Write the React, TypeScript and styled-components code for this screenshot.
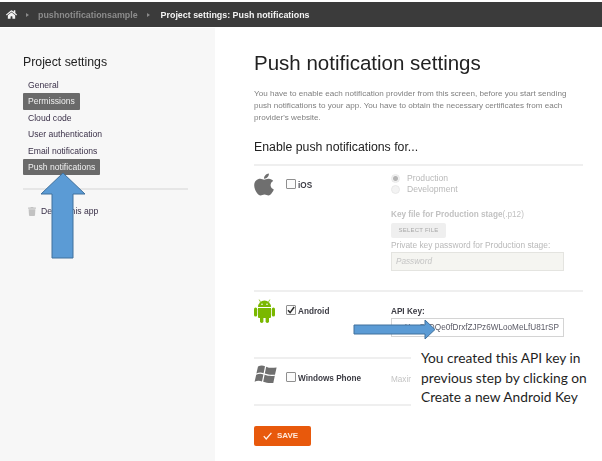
import React from 'react';
import styled, { createGlobalStyle } from 'styled-components';
import { FaApple, FaHome, FaTrash } from 'react-icons/fa';

const GlobalStyle = createGlobalStyle`
  html, body {
    margin: 0;
    padding: 0;
    background: #ffffff;
  }
  body {
    font-family: "Liberation Sans", Arial, sans-serif;
  }
`;

const Page = styled.div`
  position: relative;
  display: flex;
  flex-direction: column;
  width: 602px;
  height: 461px;
  overflow: hidden;
  padding-top: 2px;
  box-sizing: border-box;
  filter: blur(0.35px);
`;

const TopBar = styled.header`
  display: flex;
  align-items: center;
  flex: 0 0 25px;
  padding-left: 6px;
  background-color: #3b3b3b;
  font-size: 8.9px;
  font-weight: bold;
`;

const HomeIcon = styled(FaHome)`
  width: 11px;
  height: 11px;
  color: #f2f2f2;
`;

const Caret = styled.span`
  width: 0;
  height: 0;
  margin: 0 9px 0 9px;
  border-left: 3px solid #8a8a8a;
  border-top: 2px solid transparent;
  border-bottom: 2px solid transparent;
`;

const Crumb = styled.span<{ $current?: boolean }>`
  margin-left: ${(p) => (p.$current ? '2px' : '0')};
  color: ${(p) => (p.$current ? '#f4f4f4' : '#8c8c8c')};
`;

const Body = styled.div`
  display: flex;
  flex: 1;
  margin-top: 1px;
`;

const Sidebar = styled.aside`
  flex: 0 0 215px;
  box-sizing: border-box;
  padding: 26px 27px 0 23px;
  background-color: #f7f7f7;
`;

const SideTitle = styled.h2`
  margin: 0 0 6px;
  font-size: 12.3px;
  line-height: 17px;
  font-weight: normal;
  color: #222222;
`;

const SideNav = styled.nav`
  display: flex;
  flex-direction: column;
  align-items: flex-start;
  padding-bottom: 13px;
  border-bottom: 2px solid #e6e6e6;
`;

const SideItem = styled.a<{ $active?: boolean }>`
  height: 16.4px;
  padding: 0 5px;
  border-radius: 1px;
  font-size: 8.6px;
  line-height: 16px;
  color: ${(p) => (p.$active ? '#f0f0f0' : '#3a3048')};
  background-color: ${(p) => (p.$active ? '#6a6a6a' : 'transparent')};
`;

const DeleteLink = styled.a`
  display: flex;
  align-items: center;
  gap: 5px;
  margin: 16px 0 0 5px;
  font-size: 8.6px;
  color: #3a3048;
`;

const TrashIcon = styled(FaTrash)`
  width: 8px;
  height: 9px;
  color: #c2c2c2;
`;

const Main = styled.main`
  flex: 1;
  padding: 22px 19px 0 39px;
`;

const Title = styled.h1`
  margin: 0;
  font-size: 20.5px;
  line-height: 26px;
  font-weight: normal;
  color: #222222;
`;

const Intro = styled.p`
  margin: 12px 0 0;
  font-size: 8.1px;
  line-height: 12.2px;
  color: #808080;
`;

const SectionTitle = styled.h3`
  margin: 14px 0 9px;
  font-size: 12.3px;
  line-height: 16px;
  font-weight: normal;
  color: #222222;
`;

const ProviderRow = styled.section<{ $height: number }>`
  display: grid;
  grid-template-columns: 32px 105px 1fr;
  height: ${(p) => p.$height}px;
  box-sizing: border-box;
  padding-top: 7px;
  border-top: 2px solid #efefef;
`;

const RowEnd = styled.div`
  height: 2px;
  background-color: #efefef;
`;

const ProviderIcon = styled.div`
  margin-top: -1px;
  color: #6f6f6f;
  line-height: 0;

  svg {
    width: 20px;
    height: 25px;
    fill: currentColor;
  }
`;

const AndroidIcon = styled(ProviderIcon)`
  margin-top: 0;
  color: #7ab800;

  svg {
    width: 21px;
    height: 24px;
  }
`;

const WindowsIcon = styled(ProviderIcon)`
  svg {
    width: 23px;
    height: 20px;
  }
`;

const ProviderLabel = styled.label`
  display: flex;
  align-items: center;
  align-self: start;
  gap: 2px;
  height: 12px;
  margin-top: 6.5px;
  font-size: 8.2px;
  font-weight: bold;
  color: #3c3c44;
`;

const CheckBox = styled.span`
  display: flex;
  align-items: center;
  justify-content: center;
  width: 8px;
  height: 8px;
  margin-top: -2px;
  border: 1px solid #8f8f8f;
  border-radius: 1px;
  background-color: #fbfbfb;
`;

const Radio = styled.span<{ $on?: boolean }>`
  width: 9px;
  height: 9px;
  box-sizing: border-box;
  border: 1px solid #e8e8e8;
  border-radius: 50%;
  background: ${(p) => (p.$on ? 'radial-gradient(circle, #b5b5b5 0 2px, #f2f2f2 3px)' : '#f3f3f3')};
`;

const RadioLine = styled.div`
  display: flex;
  align-items: center;
  gap: 7px;
  height: 11px;
  font-size: 8.6px;
  color: #b9b9b9;
`;

const Form = styled.div`
  display: flex;
  flex-direction: column;
  align-items: flex-start;
`;

const FieldLabel = styled.div`
  margin-top: 14px;
  font-size: 8.2px;
  line-height: 12px;
  font-weight: bold;
  color: #c2c2c2;

  span {
    font-weight: normal;
  }
`;

const HintLabel = styled.div`
  font-size: 8.4px;
  line-height: 14px;
  color: #b9b9b9;
`;

const FileButton = styled.button`
  width: 55px;
  height: 15px;
  margin-top: 2px;
  padding: 0;
  border: none;
  border-radius: 2px;
  background-color: #efefef;
  font-family: inherit;
  font-size: 6px;
  letter-spacing: 0.2px;
  color: #a8a8a8;
`;

const PasswordBox = styled.div`
  width: 173px;
  height: 19px;
  box-sizing: border-box;
  padding: 0 4px;
  border: 1px solid #e4e4e0;
  background-color: #f5f5f1;
  font-size: 8.2px;
  font-style: italic;
  line-height: 17px;
  color: #c4c4c4;
`;

const KeyBox = styled.div`
  width: 173px;
  height: 19px;
  box-sizing: border-box;
  padding: 0 4px;
  border: 1px solid #d4d4d4;
  background-color: #ffffff;
  font-size: 8.2px;
  line-height: 17px;
  text-align: right;
  white-space: nowrap;
  overflow: hidden;
  color: #5b5b66;
`;

const ApiLabel = styled.div`
  margin: 7px 0 1px;
  font-size: 8.2px;
  line-height: 11px;
  font-weight: bold;
  color: #3c3c44;
`;

const MaxNote = styled.div`
  margin-top: 9px;
  font-size: 8.2px;
  color: #c4c4c4;
`;

const SaveButton = styled.button`
  display: flex;
  align-items: center;
  gap: 5px;
  width: 57px;
  height: 20px;
  margin-top: 20px;
  padding: 0 0 0 9px;
  border: none;
  border-radius: 2px;
  background-color: #e8590c;
  font-family: inherit;
  font-size: 8px;
  font-weight: bold;
  color: #ffe9dc;
`;

const CalloutText = styled.div`
  position: absolute;
  left: 411px;
  top: 345px;
  width: 191px;
  height: 62px;
  padding: 3px 0 0 10px;
  box-sizing: border-box;
  background-color: #ffffff;
  font-family: Lato, "Open Sans", sans-serif;
  font-size: 13.75px;
  line-height: 19.6px;
  color: #1f1f1f;
  white-space: nowrap;
`;

const ArrowUp = styled.svg`
  position: absolute;
  left: 40px;
  top: 172px;
  width: 46px;
  height: 87px;
`;

const ArrowRight = styled.svg`
  position: absolute;
  left: 353px;
  top: 319px;
  width: 83px;
  height: 21px;
`;

const WindowsFlag = () => (
  <svg viewBox="0 0 23 20" preserveAspectRatio="none">
    <path d="M4 1.5C6.5.2 8.6.2 11 1.2L9.6 8.3C7.2 7.2 5 7.3 2.4 8.6Z" />
    <path d="M12.2 1.7C15 3 17.2 3 22.6 2.6L21 9.7C17 10 14.5 9.8 10.8 8.6Z" />
    <path d="M2.2 9.7C4.7 8.5 7 8.4 9.4 9.5L8 16.6C5.6 15.5 3.2 15.5.6 16.8Z" />
    <path d="M10.6 9.8C14 11 16.8 11.2 20.8 10.8L19.3 18C15.4 18.3 12.5 18 9.2 16.8Z" />
  </svg>
);

const AndroidRobot = () => (
  <svg viewBox="0 0 21 24">
    <path d="M4 8a6.5 6.5 0 0 1 13 0Z" />
    <path d="M6.6 3.2 5.2.6M14.4 3.2 15.8.6" stroke="currentColor" strokeWidth="0.8" />
    <circle cx="8" cy="5.2" r="0.8" fill="#ffffff" />
    <circle cx="13" cy="5.2" r="0.8" fill="#ffffff" />
    <path d="M4 9h13v9a1 1 0 0 1-1 1H5a1 1 0 0 1-1-1Z" />
    <rect x="0" y="8.6" width="3.2" height="9" rx="1.6" />
    <rect x="17.8" y="8.6" width="3.2" height="9" rx="1.6" />
    <rect x="6" y="17" width="3.4" height="7" rx="1.7" />
    <rect x="11.6" y="17" width="3.4" height="7" rx="1.7" />
  </svg>
);

const Tick = () => (
  <svg width="8" height="8" viewBox="0 0 8 8">
    <path d="M1 4.2 3.1 6.6 7.2 1" fill="none" stroke="#2c2c2c" strokeWidth="1.5" />
  </svg>
);

const SaveTick = () => (
  <svg width="9" height="8" viewBox="0 0 9 8">
    <path d="M.8 4.2 3.2 7 8.4.8" fill="none" stroke="#fff2ea" strokeWidth="1.3" />
  </svg>
);

const sideLinks = [
  { label: 'General' },
  { label: 'Permissions', active: true },
  { label: 'Cloud code' },
  { label: 'User authentication' },
  { label: 'Email notifications' },
  { label: 'Push notifications', active: true },
];

export default function App() {
  return (
    <Page>
      <GlobalStyle />
      <TopBar>
        <HomeIcon />
        <Caret />
        <Crumb>pushnotificationsample</Crumb>
        <Caret />
        <Crumb $current>Project settings: Push notifications</Crumb>
      </TopBar>
      <Body>
        <Sidebar>
          <SideTitle>Project settings</SideTitle>
          <SideNav>
            {sideLinks.map((link) => (
              <SideItem key={link.label} $active={link.active}>
                {link.label}
              </SideItem>
            ))}
          </SideNav>
          <DeleteLink>
            <TrashIcon />
            Delete this app
          </DeleteLink>
        </Sidebar>
        <Main>
          <Title>Push notification settings</Title>
          <Intro>
            You have to enable each notification provider from this screen, before you start sending
            <br />
            push notifications to your app. You have to obtain the necessary certificates from each
            <br />
            provider's website.
          </Intro>
          <SectionTitle>Enable push notifications for...</SectionTitle>

          <ProviderRow $height={126}>
            <ProviderIcon>
              <FaApple preserveAspectRatio="none" />
            </ProviderIcon>
            <ProviderLabel>
              <CheckBox />
              iOS
            </ProviderLabel>
            <Form>
              <RadioLine>
                <Radio $on />
                Production
              </RadioLine>
              <RadioLine>
                <Radio />
                Development
              </RadioLine>
              <FieldLabel>
                Key file for Production stage<span>(.p12)</span>
              </FieldLabel>
              <FileButton>SELECT FILE</FileButton>
              <HintLabel>Private key password for Production stage:</HintLabel>
              <PasswordBox>Password</PasswordBox>
            </Form>
          </ProviderRow>

          <ProviderRow $height={67}>
            <AndroidIcon>
              <AndroidRobot />
            </AndroidIcon>
            <ProviderLabel>
              <CheckBox>
                <Tick />
              </CheckBox>
              Android
            </ProviderLabel>
            <Form>
              <ApiLabel>API Key:</ApiLabel>
              <KeyBox>AIzaSyDQe0fDrxfZJPz6WLooMeLfU81rSP</KeyBox>
            </Form>
          </ProviderRow>

          <ProviderRow $height={47}>
            <WindowsIcon>
              <WindowsFlag />
            </WindowsIcon>
            <ProviderLabel>
              <CheckBox />
              Windows Phone
            </ProviderLabel>
            <MaxNote>Maxir</MaxNote>
          </ProviderRow>

          <RowEnd />
          <SaveButton>
            <SaveTick />
            SAVE
          </SaveButton>
        </Main>
      </Body>

      <ArrowUp viewBox="0 0 46 87">
        <path d="M23 1 45 22H33V86H12V22H1Z" fill="#5b9bd5" stroke="#41719c" strokeWidth="1" />
      </ArrowUp>
      <ArrowRight viewBox="0 0 83 21">
        <path d="M1 6H72V1L82 10.5 72 20V15H1Z" fill="#5b9bd5" stroke="#41719c" strokeWidth="1" />
      </ArrowRight>
      <CalloutText>
        You created this API key in
        <br />
        previous step by clicking on
        <br />
        Create a new Android Key
      </CalloutText>
    </Page>
  );
}
